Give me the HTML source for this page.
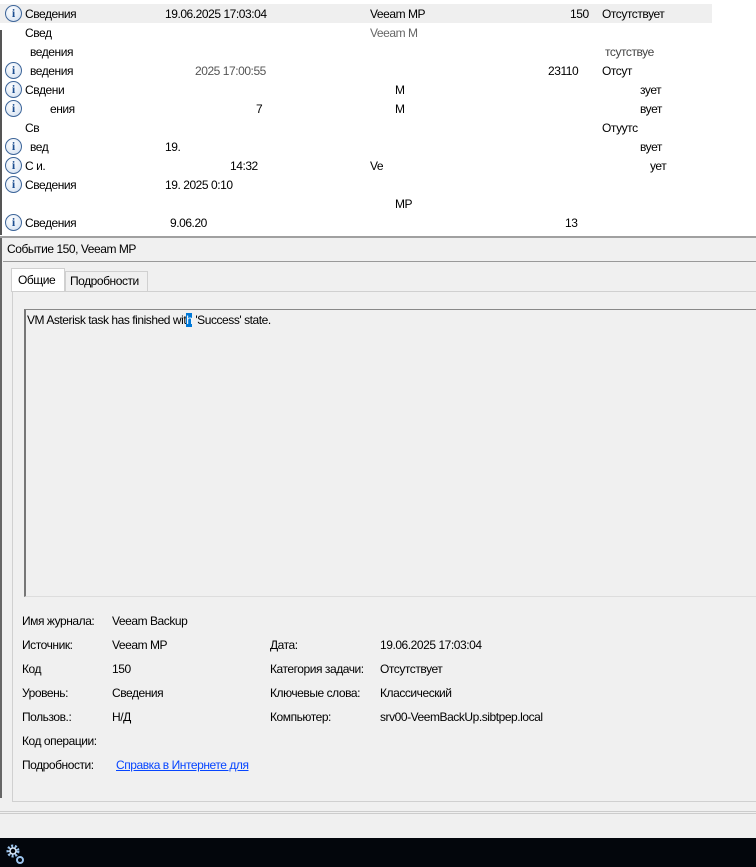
<!DOCTYPE html>
<html><head><meta charset="utf-8"><style>
*{margin:0;padding:0;box-sizing:border-box}
body{width:756px;height:867px;overflow:hidden;background:#f0f0f0;font-family:"Liberation Sans",sans-serif;font-size:12px;letter-spacing:-0.45px;color:#000;position:relative}
.a{position:absolute;white-space:nowrap}
#list{position:absolute;left:0;top:0;width:756px;height:236px;background:#fff}
.ic{position:absolute;left:5px;width:17px;height:17px;border-radius:50%;border:1.5px solid #3d6599;background:radial-gradient(circle at 40% 35%,#fff,#d0def0);color:#1d4f91;font:bold 12px "Liberation Serif",serif;text-align:center;line-height:14px;letter-spacing:0}
.lnk{color:#0645ff;text-decoration:underline}
</style></head><body>
<div id="list">
<div class="a" style="left:0;top:4px;width:712px;height:19px;background:#efefef"></div>
<div class="a" style="left:0;top:30px;width:2px;height:205px;background:#555"></div>
<div class="ic" style="top:5px">i</div>
<div class="a" style="left:25px;top:7px">Сведения</div>
<div class="a" style="left:165px;top:7px">19.06.2025 17:03:04</div>
<div class="a" style="left:370px;top:7px">Veeam MP</div>
<div class="a" style="left:570px;top:7px">150</div>
<div class="a" style="left:602px;top:7px">Отсутствует</div>
<div class="a" style="left:25px;top:26px">Свед</div>
<div class="a" style="left:370px;top:26px;color:#666">Veeam M</div>
<div class="a" style="left:30px;top:45px">ведения</div>
<div class="a" style="left:605px;top:45px;color:#444">тсутствуе</div>
<div class="ic" style="top:62px">i</div>
<div class="a" style="left:30px;top:64px">ведения</div>
<div class="a" style="left:195px;top:64px;color:#555">2025 17:00:55</div>
<div class="a" style="left:548px;top:64px">23110</div>
<div class="a" style="left:602px;top:64px">Отсут</div>
<div class="ic" style="top:81px">i</div>
<div class="a" style="left:25px;top:83px">Свдени</div>
<div class="a" style="left:395px;top:83px">M</div>
<div class="a" style="left:640px;top:83px">зует</div>
<div class="ic" style="top:100px">i</div>
<div class="a" style="left:50px;top:102px">ения</div>
<div class="a" style="left:256px;top:102px">7</div>
<div class="a" style="left:395px;top:102px">M</div>
<div class="a" style="left:640px;top:102px">вует</div>
<div class="a" style="left:25px;top:121px">Св</div>
<div class="a" style="left:602px;top:121px">Отуутс</div>
<div class="ic" style="top:138px">i</div>
<div class="a" style="left:30px;top:140px">вед</div>
<div class="a" style="left:165px;top:140px">19.</div>
<div class="a" style="left:640px;top:140px">вует</div>
<div class="ic" style="top:157px">i</div>
<div class="a" style="left:25px;top:159px">С    и.</div>
<div class="a" style="left:230px;top:159px">14:32</div>
<div class="a" style="left:370px;top:159px">Ve</div>
<div class="a" style="left:650px;top:159px">ует</div>
<div class="ic" style="top:176px">i</div>
<div class="a" style="left:25px;top:178px">Сведения</div>
<div class="a" style="left:165px;top:178px">19.   2025   0:10</div>
<div class="a" style="left:395px;top:197px">MP</div>
<div class="ic" style="top:214px">i</div>
<div class="a" style="left:25px;top:216px">Сведения</div>
<div class="a" style="left:170px;top:216px">9.06.20</div>
<div class="a" style="left:565px;top:216px">13</div>
</div>
<div class="a" style="left:0;top:236px;width:756px;height:2px;background:#a0a0a0"></div>
<div class="a" style="left:0;top:238px;width:2px;height:560px;background:#666"></div>
<div class="a" style="left:7px;top:242px">Событие 150, Veeam MP</div>
<div class="a" style="left:3px;top:261px;width:753px;height:1px;background:#999"></div>
<div class="a" style="left:11px;top:268px;width:54px;height:24px;background:#fff;border:1px solid #d0d0d0;border-bottom:none;padding:4px 0 0 6px">Общие</div>
<div class="a" style="left:65px;top:271px;width:83px;height:20px;background:#f0f0f0;border:1px solid #d0d0d0;border-bottom:none;padding:2px 0 0 4px">Подробности</div>
<div class="a" style="left:12px;top:291px;width:750px;height:511px;border:1px solid #d0d0d0;border-right:none"></div>
<div class="a" style="left:24px;top:309px;width:740px;height:288px;border-top:1px solid #888;border-left:2px solid #777;border-bottom:1px solid #ddd"></div>
<div class="a" style="left:27px;top:313px">VM Asterisk task has finished wit<span style="background:#0078d7;color:#fff">h</span> 'Success' state.</div>
<div class="a" style="left:22px;top:614px">Имя журнала:</div><div class="a" style="left:112px;top:614px">Veeam Backup</div>
<div class="a" style="left:22px;top:638px">Источник:</div><div class="a" style="left:112px;top:638px">Veeam MP</div>
<div class="a" style="left:270px;top:638px">Дата:</div><div class="a" style="left:380px;top:638px">19.06.2025 17:03:04</div>
<div class="a" style="left:22px;top:662px">Код</div><div class="a" style="left:112px;top:662px">150</div>
<div class="a" style="left:270px;top:662px">Категория задачи:</div><div class="a" style="left:380px;top:662px">Отсутствует</div>
<div class="a" style="left:22px;top:686px">Уровень:</div><div class="a" style="left:112px;top:686px">Сведения</div>
<div class="a" style="left:270px;top:686px">Ключевые слова:</div><div class="a" style="left:380px;top:686px">Классический</div>
<div class="a" style="left:22px;top:710px">Пользов.:</div><div class="a" style="left:112px;top:710px">Н/Д</div>
<div class="a" style="left:270px;top:710px">Компьютер:</div><div class="a" style="left:380px;top:710px">srv00-VeemBackUp.sibtpep.local</div>
<div class="a" style="left:22px;top:734px">Код операции:</div>
<div class="a" style="left:22px;top:758px">Подробности:</div><div class="a lnk" style="left:116px;top:758px">Справка в Интернете для</div>
<div class="a" style="left:0;top:811px;width:756px;height:1px;background:#ccc"></div>
<div class="a" style="left:0;top:813px;width:756px;height:1px;background:#ccc"></div>
<div class="a" style="left:0;top:838px;width:756px;height:29px;background:#03060c"></div>
<svg class="a" style="left:6px;top:843px" width="18" height="22" viewBox="0 0 18 22">
<circle cx="7" cy="8" r="5" fill="none" stroke="#9cc4ee" stroke-width="3" stroke-dasharray="2 1.6"/>
<circle cx="7" cy="8" r="3" fill="none" stroke="#dbe9f8" stroke-width="1.5"/>
<circle cx="14" cy="17" r="3" fill="none" stroke="#9cc4ee" stroke-width="2"/>
</svg>
</body></html>
